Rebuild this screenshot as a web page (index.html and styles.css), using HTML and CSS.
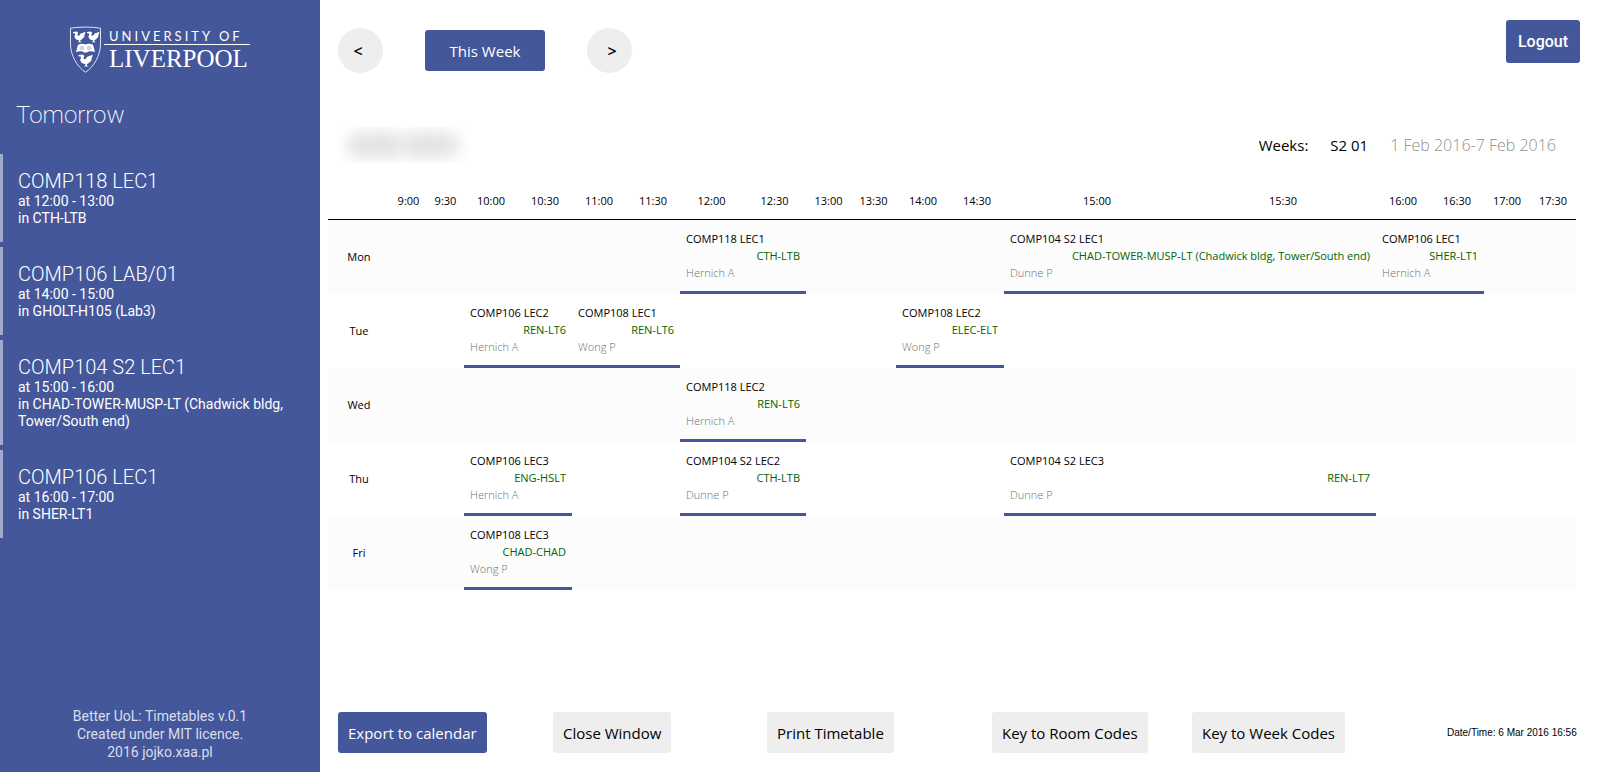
FILE: index.html
```html
<!DOCTYPE html>
<html lang="en">
<head>
<meta charset="utf-8">
<title>Timetable</title>
<link rel="stylesheet" href="styles.css">
</head>
<body>
<div class="app">
  <aside class="sidebar">
    <svg class="logo" viewBox="0 0 182 48" width="182" height="48" role="img" aria-label="University of Liverpool">
      <defs>
        <path id="bird" d="M0 .4 3.600 0 4.900 1 5 2.200 4.200 3.200 4.800 4.300 6.400 3.900 7.600 2 9.500 1.400 12.300 .3 12 2.600 11.200 3.400 11.600 4.800 10.200 6.600 8.800 8 7.400 8.600 7.400 9.900 8.800 10.800H4.400L6 9.900 5.900 8.700 3.700 8.200 2 6.700 1.400 4.800 2.200 3.200 1.900 1.900 0 1.500Z"/>
      </defs>
      <path class="logo-outline" d="M1.500 2.200C11 .7 22.500 .7 31.500 2.200V18C31.500 29.500 25 40.500 16.500 46.300C8 40.500 1.500 29.500 1.500 18Z"/>
      <g class="logo-fill">
        <use href="#bird" x="4" y="5.500"/>
        <use href="#bird" x="18" y="5.500"/>
        <use href="#bird" transform="translate(9.500 28.500) scale(1.150 1.100)"/>
        <path d="M9 18.800C11.500 17.300 14.500 17.300 16.500 18.600 18.500 17.300 21.500 17.300 24 18.800L26 26C22 25 19.500 25.200 18 26.500H15C13.500 25.200 11 25 7 26Z"/>
        <rect x="35" y="18" width="146" height="1"/>
      </g>
      <path class="logo-lines" d="M11 21h4M18 21h4M10.500 23h4.500M18 23h4.500"/>
      <text class="logo-top" x="40" y="15">UNIVERSITY OF</text>
      <text class="logo-name" x="40" y="41">LIVERPOOL</text>
    </svg>
    <h1 class="day-title">Tomorrow</h1>
    <ul class="upcoming">
      <li class="lesson"><h2 class="lesson-name">COMP118 LEC1</h2><p>at 12:00 - 13:00</p><p>in CTH-LTB</p></li>
      <li class="lesson"><h2 class="lesson-name">COMP106 LAB/01</h2><p>at 14:00 - 15:00</p><p>in GHOLT-H105 (Lab3)</p></li>
      <li class="lesson"><h2 class="lesson-name">COMP104 S2 LEC1</h2><p>at 15:00 - 16:00</p><p>in CHAD-TOWER-MUSP-LT (Chadwick bldg, Tower/South end)</p></li>
      <li class="lesson"><h2 class="lesson-name">COMP106 LEC1</h2><p>at 16:00 - 17:00</p><p>in SHER-LT1</p></li>
    </ul>
    <footer class="credits">
      <p>Better UoL: Timetables v.0.1</p>
      <p>Created under MIT licence.</p>
      <p>2016 jojko.xaa.pl</p>
    </footer>
  </aside>
  <main class="main">
    <div class="toolbar">
      <nav class="week-nav">
        <button class="round" type="button" aria-label="Previous week">&lt;</button>
        <button class="btn primary wide" type="button">This Week</button>
        <button class="round next" type="button" aria-label="Next week">&gt;</button>
      </nav>
      <button class="btn primary logout" type="button">Logout</button>
    </div>
    <div class="heading">
      <div class="student" aria-hidden="true"><span class="smudge"></span><span class="smudge"></span></div>
      <p class="weeks"><span>Weeks:</span><span>S2 01</span><span class="dates">1 Feb 2016-7 Feb 2016</span></p>
    </div>
    <table class="timetable">
      <colgroup>
        <col class="c-day"><col class="c-9" span="2"><col class="c-hour" span="4"><col class="c-12" span="2"><col class="c-13" span="2"><col class="c-hour" span="2"><col class="c-15" span="2"><col class="c-hour" span="2"><col class="c-17" span="2">
      </colgroup>
      <thead>
        <tr><td></td><th>9:00</th><th>9:30</th><th>10:00</th><th>10:30</th><th>11:00</th><th>11:30</th><th>12:00</th><th>12:30</th><th>13:00</th><th>13:30</th><th>14:00</th><th>14:30</th><th>15:00</th><th>15:30</th><th>16:00</th><th>16:30</th><th>17:00</th><th>17:30</th></tr>
      </thead>
      <tbody>
        <tr>
          <th>Mon</th><td colspan="6"></td>
          <td class="event" colspan="2"><p>COMP118 LEC1</p><p class="room">CTH-LTB</p><p class="staff">Hernich A</p></td>
          <td colspan="4"></td>
          <td class="event" colspan="2"><p>COMP104 S2 LEC1</p><p class="room">CHAD-TOWER-MUSP-LT (Chadwick bldg, Tower/South end)</p><p class="staff">Dunne P</p></td>
          <td class="event" colspan="2"><p>COMP106 LEC1</p><p class="room">SHER-LT1</p><p class="staff">Hernich A</p></td>
          <td colspan="2"></td>
        </tr>
        <tr>
          <th>Tue</th><td colspan="2"></td>
          <td class="event" colspan="2"><p>COMP106 LEC2</p><p class="room">REN-LT6</p><p class="staff">Hernich A</p></td>
          <td class="event" colspan="2"><p>COMP108 LEC1</p><p class="room">REN-LT6</p><p class="staff">Wong P</p></td>
          <td colspan="4"></td>
          <td class="event" colspan="2"><p>COMP108 LEC2</p><p class="room">ELEC-ELT</p><p class="staff">Wong P</p></td>
          <td colspan="6"></td>
        </tr>
        <tr>
          <th>Wed</th><td colspan="6"></td>
          <td class="event" colspan="2"><p>COMP118 LEC2</p><p class="room">REN-LT6</p><p class="staff">Hernich A</p></td>
          <td colspan="10"></td>
        </tr>
        <tr>
          <th>Thu</th><td colspan="2"></td>
          <td class="event" colspan="2"><p>COMP106 LEC3</p><p class="room">ENG-HSLT</p><p class="staff">Hernich A</p></td>
          <td colspan="2"></td>
          <td class="event" colspan="2"><p>COMP104 S2 LEC2</p><p class="room">CTH-LTB</p><p class="staff">Dunne P</p></td>
          <td colspan="4"></td>
          <td class="event" colspan="2"><p>COMP104 S2 LEC3</p><p class="room">REN-LT7</p><p class="staff">Dunne P</p></td>
          <td colspan="4"></td>
        </tr>
        <tr>
          <th>Fri</th><td colspan="2"></td>
          <td class="event" colspan="2"><p>COMP108 LEC3</p><p class="room">CHAD-CHAD</p><p class="staff">Wong P</p></td>
          <td colspan="14"></td>
        </tr>
      </tbody>
    </table>
    <div class="actions">
      <button class="btn primary" type="button">Export to calendar</button>
      <button class="btn" type="button">Close Window</button>
      <button class="btn" type="button">Print Timetable</button>
      <button class="btn" type="button">Key to Room Codes</button>
      <button class="btn" type="button">Key to Week Codes</button>
      <span class="stamp">Date/Time: 6 Mar 2016 16:56</span>
    </div>
  </main>
</div>
</body>
</html>
```
FILE: styles.css
```css
* { box-sizing: border-box; }
body, h1, h2, p, ul { margin: 0; padding: 0; }
body { background: #fff; color: #000; font-family: "Open Sans", "Noto Sans", sans-serif; }
.app { display: flex; min-height: 100vh; }

.sidebar {
  width: 20%;
  flex: none;
  display: flex;
  flex-direction: column;
  background: #44579b;
  color: #fff;
  font-family: Roboto, sans-serif;
}
.logo { display: block; margin: 26px auto 0; padding: 0; }
.logo-outline { fill: none; stroke: #dfe3f0; stroke-width: 1; }
.logo-fill { fill: #fff; }
.logo-lines { fill: none; stroke: #44579b; stroke-width: 0.5; }
.logo-top { fill: #fff; font: 400 13px Lato, sans-serif; letter-spacing: 3px; }
.logo-name { fill: #fff; font: 400 25px "Liberation Serif", serif; }
.day-title { padding: 26px 16px 0; font-size: 24px; font-weight: 200; line-height: 30px; }
.upcoming { margin-top: 24px; list-style: none; display: grid; gap: 5px; }
.lesson { padding: 15px; border-left: 3px solid #a2abcd; font-size: 14px; line-height: 17px; }
.lesson-name { font-size: 20px; font-weight: 300; line-height: 24px; }
.credits { margin-top: auto; padding-bottom: 11px; text-align: center; font-size: 14px; line-height: 18px; color: #dadeeb; }

.main { flex: 1; min-width: 0; display: flex; flex-direction: column; padding: 20px 24px 19px 8px; }
.toolbar { display: flex; justify-content: space-between; align-items: flex-start; margin-right: -4px; }
.week-nav { display: flex; align-items: center; gap: 42px; padding: 8px 10px 0; }
button { border: 0; margin: 0; font: inherit; color: #000; cursor: pointer; }
.round { width: 45px; height: 45px; padding: 0 5px 0 0; border-radius: 50%; background: #eee; font-size: 16px; font-weight: 600; }
.round.next { padding: 0 0 0 5px; }
.btn { height: 41px; padding: 0 10px; border-radius: 3px; background: #eee; font-size: 15px; white-space: nowrap; }
.primary { background: #44579b; color: #fff; }
.wide { width: 120px; }
.logout { height: 43px; width: 74px; font: 500 16px Roboto, sans-serif; }

.heading { display: flex; justify-content: space-between; align-items: center; margin-top: 54px; padding: 0 20px 0 8px; }
.student { display: flex; gap: 6px; width: 134px; height: 36px; padding: 6px 12px; overflow: hidden; background: radial-gradient(closest-side, #f0f0f0, #fff); }
.smudge { flex: 1; border-radius: 10px; background: #e2e2e2; filter: blur(8px); }
.weeks { display: flex; align-items: baseline; gap: 22px; font-size: 15px; line-height: 20px; }
.dates { color: #909090; font-size: 16px; font-weight: 300; }

.timetable { width: 100%; margin-top: 18px; border-collapse: collapse; table-layout: fixed; font-size: 11px; line-height: 17px; }
.timetable th, .timetable td { padding: 0; font-weight: 400; }
.timetable thead tr { height: 38px; border-bottom: 1px solid #000; }
.timetable thead th { padding-top: 2px; }
.timetable tbody tr { height: 74px; }
.timetable tbody tr:nth-child(odd) { background: #fcfcfc; }
.timetable .event { height: 74px; padding: 10px 6px 13px; text-align: left; vertical-align: top; box-shadow: inset 0 -3px #44579b; white-space: nowrap; }
.event .room { color: #006400; text-align: right; }
.event .staff { color: #707070; font-weight: 300; }
.c-day { width: 62px; }
.c-9 { width: 37px; }
.c-hour { width: 54px; }
.c-12 { width: 63px; }
.c-13 { width: 45px; }
.c-15 { width: 186px; }
.c-17 { width: 46px; }

.actions {
  display: grid;
  grid-template-columns: 215fr 214fr 225fr 200fr 255fr 137fr;
  justify-items: start;
  align-items: center;
  margin: auto -8px 0 10px;
}
.stamp { font: 10px "Liberation Sans", sans-serif; white-space: nowrap; }
```
